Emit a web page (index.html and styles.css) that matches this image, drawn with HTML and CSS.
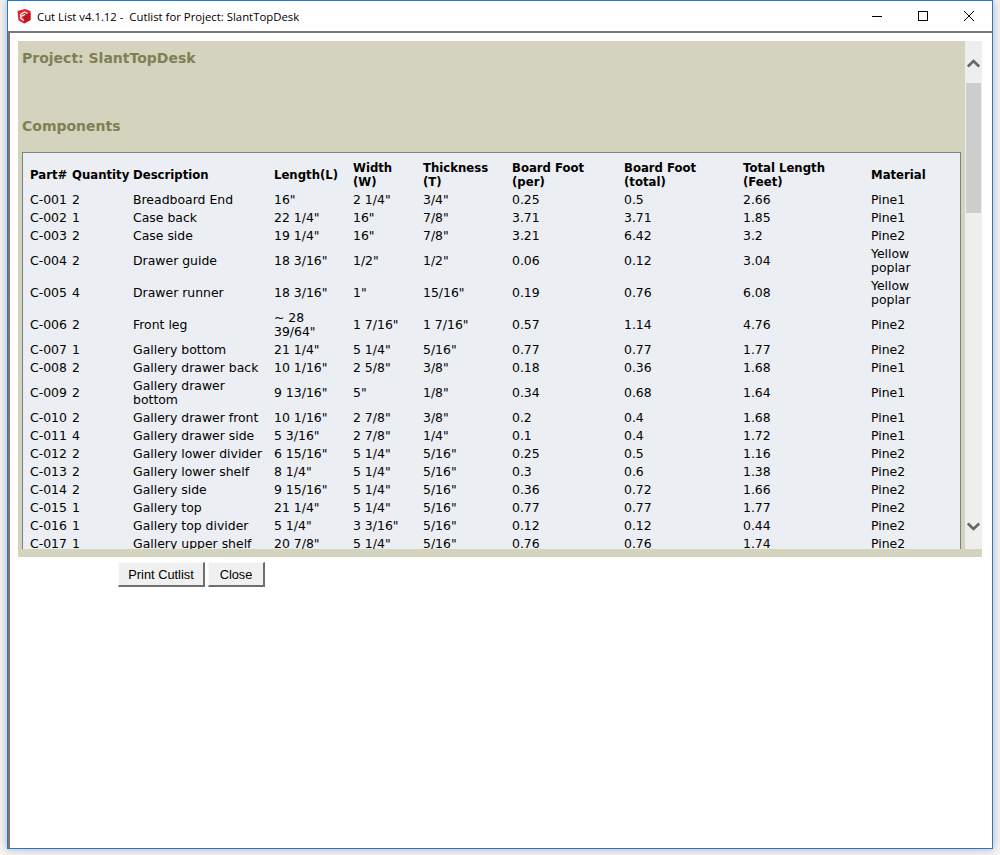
FILE: index.html
```html
<!DOCTYPE html>
<html lang="en">
<head>
<meta charset="utf-8">
<title>Cut List</title>
<link rel="stylesheet" href="styles.css">
</head>
<body>
<div class="window">
  <header class="titlebar">
    <svg class="app-icon" width="16" height="16" viewBox="0 0 16 16"><path d="M1.5 3 9 1 14.5 3 14.5 12 8 15.5 2.5 12.5Z" fill="#e2252b"/><path d="M8 8 14.5 4.5 14.5 12 8 15.5Z" fill="#b9161d"/><path d="M4.5 6.5 8.5 4 11.5 5.5M4.5 6.5 5 10.5 8 12.5M5 8.5 9 6.5" fill="none" stroke="#fff" stroke-width="1.3"/></svg>
    <span class="title">Cut List v4.1.12 -&nbsp; Cutlist for Project: SlantTopDesk</span>
    <div class="controls">
      <svg width="46" height="30" viewBox="0 0 46 30"><path d="M18 15.5H28" stroke="#000"/></svg>
      <svg width="46" height="30" viewBox="0 0 46 30"><rect x="18.5" y="10.5" width="9" height="9" fill="none" stroke="#000"/></svg>
      <svg width="46" height="30" viewBox="0 0 46 30"><path d="M18 10 28 20M28 10 18 20" stroke="#000" fill="none"/></svg>
    </div>
  </header>
  <main class="client">
    <section class="panel">
      <div class="viewport">
        <div class="content">
          <h2 class="heading project">Project: SlantTopDesk</h2>
          <h2 class="heading components">Components</h2>
          <div class="tablebox">
            <table class="cuts">
              <colgroup>
                <col class="c1"><col class="c2"><col class="c3"><col class="c4"><col class="c5"><col class="c6"><col class="c7"><col class="c8"><col class="c9"><col class="c10">
              </colgroup>
              <thead>
                <tr><th>Part#</th><th>Quantity</th><th>Description</th><th>Length(L)</th><th>Width (W)</th><th>Thickness (T)</th><th>Board Foot (per)</th><th>Board Foot (total)</th><th>Total Length (Feet)</th><th>Material</th></tr>
              </thead>
              <tbody>
                <tr><td>C-001</td><td>2</td><td>Breadboard End</td><td>16"</td><td>2 1/4"</td><td>3/4"</td><td>0.25</td><td>0.5</td><td>2.66</td><td>Pine1</td></tr>
                <tr><td>C-002</td><td>1</td><td>Case back</td><td>22 1/4"</td><td>16"</td><td>7/8"</td><td>3.71</td><td>3.71</td><td>1.85</td><td>Pine1</td></tr>
                <tr><td>C-003</td><td>2</td><td>Case side</td><td>19 1/4"</td><td>16"</td><td>7/8"</td><td>3.21</td><td>6.42</td><td>3.2</td><td>Pine2</td></tr>
                <tr><td>C-004</td><td>2</td><td>Drawer guide</td><td>18 3/16"</td><td>1/2"</td><td>1/2"</td><td>0.06</td><td>0.12</td><td>3.04</td><td>Yellow poplar</td></tr>
                <tr><td>C-005</td><td>4</td><td>Drawer runner</td><td>18 3/16"</td><td>1"</td><td>15/16"</td><td>0.19</td><td>0.76</td><td>6.08</td><td>Yellow poplar</td></tr>
                <tr><td>C-006</td><td>2</td><td>Front leg</td><td>~ 28 39/64"</td><td>1 7/16"</td><td>1 7/16"</td><td>0.57</td><td>1.14</td><td>4.76</td><td>Pine2</td></tr>
                <tr><td>C-007</td><td>1</td><td>Gallery bottom</td><td>21 1/4"</td><td>5 1/4"</td><td>5/16"</td><td>0.77</td><td>0.77</td><td>1.77</td><td>Pine2</td></tr>
                <tr><td>C-008</td><td>2</td><td>Gallery drawer back</td><td>10 1/16"</td><td>2 5/8"</td><td>3/8"</td><td>0.18</td><td>0.36</td><td>1.68</td><td>Pine1</td></tr>
                <tr><td>C-009</td><td>2</td><td>Gallery drawer bottom</td><td>9 13/16"</td><td>5"</td><td>1/8"</td><td>0.34</td><td>0.68</td><td>1.64</td><td>Pine1</td></tr>
                <tr><td>C-010</td><td>2</td><td>Gallery drawer front</td><td>10 1/16"</td><td>2 7/8"</td><td>3/8"</td><td>0.2</td><td>0.4</td><td>1.68</td><td>Pine1</td></tr>
                <tr><td>C-011</td><td>4</td><td>Gallery drawer side</td><td>5 3/16"</td><td>2 7/8"</td><td>1/4"</td><td>0.1</td><td>0.4</td><td>1.72</td><td>Pine1</td></tr>
                <tr><td>C-012</td><td>2</td><td>Gallery lower divider</td><td>6 15/16"</td><td>5 1/4"</td><td>5/16"</td><td>0.25</td><td>0.5</td><td>1.16</td><td>Pine2</td></tr>
                <tr><td>C-013</td><td>2</td><td>Gallery lower shelf</td><td>8 1/4"</td><td>5 1/4"</td><td>5/16"</td><td>0.3</td><td>0.6</td><td>1.38</td><td>Pine2</td></tr>
                <tr><td>C-014</td><td>2</td><td>Gallery side</td><td>9 15/16"</td><td>5 1/4"</td><td>5/16"</td><td>0.36</td><td>0.72</td><td>1.66</td><td>Pine2</td></tr>
                <tr><td>C-015</td><td>1</td><td>Gallery top</td><td>21 1/4"</td><td>5 1/4"</td><td>5/16"</td><td>0.77</td><td>0.77</td><td>1.77</td><td>Pine2</td></tr>
                <tr><td>C-016</td><td>1</td><td>Gallery top divider</td><td>5 1/4"</td><td>3 3/16"</td><td>5/16"</td><td>0.12</td><td>0.12</td><td>0.44</td><td>Pine2</td></tr>
                <tr><td>C-017</td><td>1</td><td>Gallery upper shelf</td><td>20 7/8"</td><td>5 1/4"</td><td>5/16"</td><td>0.76</td><td>0.76</td><td>1.74</td><td>Pine2</td></tr>
              </tbody>
            </table>
          </div>
        </div>
        <div class="scrollbar">
          <svg class="arrow" width="17" height="42" viewBox="0 0 17 42"><path d="M2.8 25.5 8.5 20 14.2 25.5" fill="none" stroke="#666" stroke-width="2.6"/></svg>
          <div class="thumb"></div>
          <svg class="arrow arrow-down" width="17" height="30" viewBox="0 0 17 30"><path d="M2.8 10.5 8.5 16 14.2 10.5" fill="none" stroke="#666" stroke-width="2.6"/></svg>
        </div>
      </div>
      <div class="strip"></div>
    </section>
    <div class="actions">
      <button class="btn btn-print">Print Cutlist</button>
      <button class="btn btn-close">Close</button>
    </div>
  </main>
</div>
</body>
</html>
```
FILE: styles.css
```css
html, body {
  margin: 0;
  padding: 0;
  height: 855px;
  overflow: hidden;
  background: #f4f4f4;
}
.window {
  box-sizing: border-box;
  margin-left: 7px;
  width: 986px;
  height: 849px;
  background: #fff;
  border: 1px solid #1a7ad4;
  box-shadow: 0 0 9px rgba(0, 0, 0, 0.28);
  display: flex;
  flex-direction: column;
}
.titlebar {
  height: 30px;
  flex: none;
  display: flex;
  align-items: center;
  padding-left: 8px;
  font-family: "Open Sans", sans-serif;
  font-size: 11.35px;
  color: #000;
}
.app-icon { margin-top: -1px; }
.title { margin-left: 5px; white-space: nowrap; }
.controls { margin-left: auto; display: flex; }
.client {
  flex: 1;
  border-top: 2px solid #7a7a7a;
  border-left: 2px solid #7a7a7a;
  padding: 8px 10px 0 8px;
  min-height: 0;
}
.panel { width: 964px; }
.viewport {
  display: flex;
  height: 508px;
}
.content {
  flex: 1;
  min-width: 0;
  overflow: hidden;
  background: #d4d3bd;
  padding: 0 4px;
}
.heading {
  margin: 0;
  font-family: "DejaVu Sans", sans-serif;
  font-weight: bold;
  font-size: 14px;
  line-height: 17px;
  color: #7f7f55;
}
.project { padding-top: 9px; }
.components { padding-top: 51px; }
.tablebox {
  margin-top: 17px;
  border: 1px solid #808080;
  background: #ebeef2;
  padding: 6px 0 20px 7px;
}
.cuts {
  table-layout: fixed;
  border-collapse: collapse;
  width: 930px;
  font-family: "DejaVu Sans", sans-serif;
  font-size: 12.45px;
  line-height: 14px;
  color: #000;
}
.cuts th {
  text-align: left;
  font-weight: bold;
  font-size: 11.7px;
  padding: 2px 4px 2px 0;
  vertical-align: middle;
}
.cuts td {
  padding: 2px 4px 2px 0;
  vertical-align: middle;
}
.cuts th:nth-child(-n+3) { padding-right: 0; white-space: nowrap; }
.cuts td:first-child { padding-right: 0; white-space: nowrap; }
.cuts td:last-child { padding-right: 28px; }
.c1 { width: 42px; }
.c2 { width: 61px; }
.c3 { width: 141px; }
.c4 { width: 79px; }
.c5 { width: 70px; }
.c6 { width: 89px; }
.c7 { width: 112px; }
.c8 { width: 119px; }
.c9 { width: 128px; }
.c10 { width: 89px; }
.scrollbar {
  width: 17px;
  flex: none;
  background: #eeeeee;
  display: flex;
  flex-direction: column;
}
.arrow { display: block; flex: none; }
.thumb {
  height: 130px;
  width: 15px;
  margin-left: 1px;
  background: #cdcdcd;
  flex: none;
}
.arrow-down { margin-top: auto; margin-bottom: 6px; }
.strip { height: 8px; background: #d4d3bd; }
.actions {
  display: flex;
  gap: 3px;
  padding: 5px 0 0 100px;
}
.btn {
  box-sizing: border-box;
  height: 25px;
  padding: 0;
  background: #f0f0f0;
  border-style: solid;
  border-color: #f8f8f8 #6e6e6e #6e6e6e #f8f8f8;
  border-width: 1px 2px 2px 1px;
  font-family: "Liberation Sans", sans-serif;
  font-size: 12.8px;
  color: #000;
}
.btn-print { width: 87px; }
.btn-close { width: 57px; }
```
